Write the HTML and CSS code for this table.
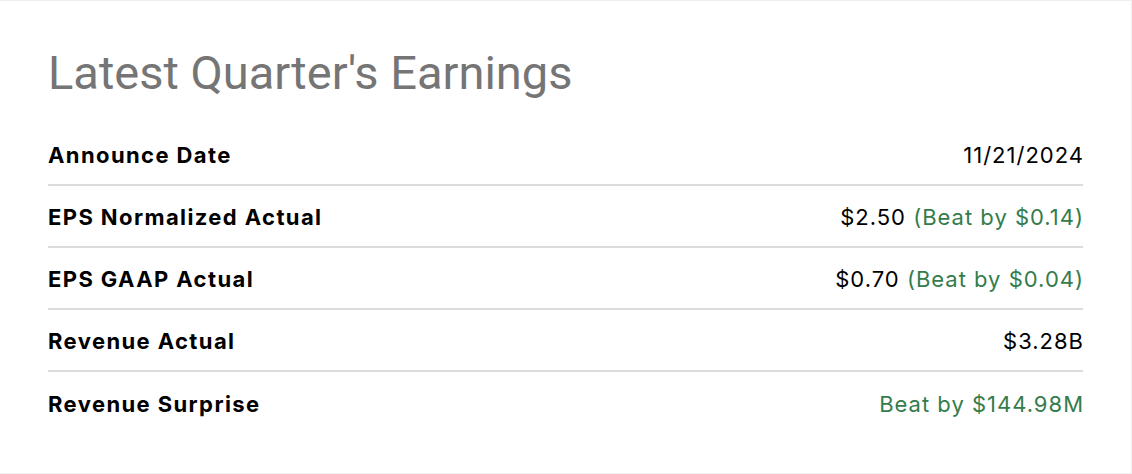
FILE: index.html
```html
<!DOCTYPE html>
<html>
<head>
<meta charset="utf-8">
<link rel="stylesheet" href="styles.css">
</head>
<body>
<section class="card">
  <h2 class="title">Latest Quarter's Earnings</h2>
  <div class="table">
    <div class="row"><span class="label">Announce Date</span><span class="value">11/21/2024</span></div>
    <div class="row"><span class="label">EPS Normalized Actual</span><span class="value">$2.50 <span class="beat">(Beat by $0.14)</span></span></div>
    <div class="row"><span class="label">EPS GAAP Actual</span><span class="value">$0.70 <span class="beat">(Beat by $0.04)</span></span></div>
    <div class="row"><span class="label">Revenue Actual</span><span class="value">$3.28B</span></div>
    <div class="row last"><span class="label">Revenue Surprise</span><span class="value"><span class="beat">Beat by $144.98M</span></span></div>
  </div>
</section>
</body>
</html>
```
FILE: styles.css
```css
html, body {
  margin: 0;
  padding: 0;
  background: #ffffff;
}
.card {
  box-sizing: border-box;
  width: 1132px;
  height: 474px;
  border: 1px solid #efefef;
  border-left: none;
  padding: 42px 48px 0 48px;
  font-family: Inter, "Liberation Sans", sans-serif;
}
.title {
  margin: 0 0 21px 0;
  font-family: Roboto, "Liberation Sans", sans-serif;
  font-weight: 400;
  font-size: 47px;
  line-height: 60px;
  color: #757575;
}
.row {
  display: flex;
  justify-content: space-between;
  align-items: center;
  box-sizing: border-box;
  height: 62px;
  padding-top: 2px;
  border-bottom: 2px solid #dcdcdc;
  font-size: 22px;
  letter-spacing: 1px;
  color: #000;
}
.row.last {
  border-bottom: none;
}
.label {
  font-weight: 700;
  letter-spacing: 1.4px;
}
.value {
  font-weight: 400;
  margin-right: -1px;
}
.beat {
  color: #347c4b;
}
```
